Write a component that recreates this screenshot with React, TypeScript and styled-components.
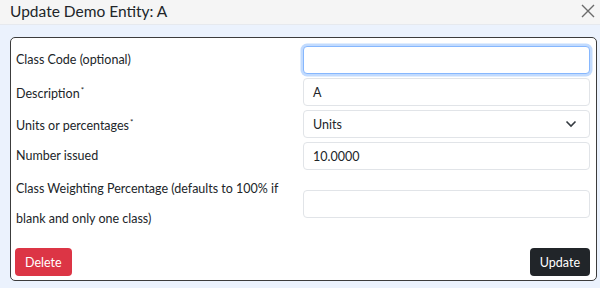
import React from 'react';
import styled, { createGlobalStyle } from 'styled-components';

const GlobalStyle = createGlobalStyle`
  html, body {
    margin: 0;
    padding: 0;
    width: 600px;
    height: 288px;
    overflow: hidden;
    background: #ebf2fd;
    font-family: Lato, "Noto Sans", sans-serif;
    color: #212529;
  }
  * { box-sizing: border-box; }
`;

const fields = [
  { label: 'Class Code (optional)', value: '', focused: true },
  { label: 'Description', required: true, value: 'A' },
  { label: 'Units or percentages', required: true, value: 'Units', select: true },
  { label: 'Number issued', value: '10.0000' },
];

export default function App() {
  return (
    <>
      <GlobalStyle />
      <Header>
        <Title>Update Demo Entity: A</Title>
        <CloseButton aria-label="Close">
          <svg width="14" height="14" viewBox="0 0 14 14">
            <path d="M1 1L13 13M13 1L1 13" stroke="#6b6b6b" strokeWidth="1.4" />
          </svg>
        </CloseButton>
      </Header>
      <Body>
        <Card>
          <Form>
            {fields.map((f) => (
              <Row key={f.label}>
                <Label>
                  {f.label}
                  {f.required && <Star>*</Star>}
                </Label>
                {f.select ? (
                  <SelectBox>
                    <span>{f.value}</span>
                    <svg width="12" height="8" viewBox="0 0 12 8">
                      <path d="M1.5 1.5L6 6L10.5 1.5" stroke="#343a40" strokeWidth="1.6" fill="none" />
                    </svg>
                  </SelectBox>
                ) : (
                  <Input focused={f.focused}>{f.value}</Input>
                )}
              </Row>
            ))}
            <Row>
              <Label tall>
                Class Weighting Percentage (defaults to 100% if blank and only one class)
              </Label>
              <Input />
            </Row>
          </Form>
          <Actions>
            <Button variant="danger">Delete</Button>
            <Button variant="dark">Update</Button>
          </Actions>
        </Card>
      </Body>
    </>
  );
}

const Header = styled.div`
  display: flex;
  align-items: center;
  justify-content: space-between;
  height: 25px;
  padding: 0 3px 2px 10px;
  background: #f5f5f5;
  border-bottom: 1px solid #e6e9ee;
`;

const Title = styled.div`
  font-size: 15.5px;
  color: #212529;
`;

const CloseButton = styled.div`
  display: flex;
  align-items: center;
  width: 16px;
  height: 16px;
`;

const Body = styled.div`
  padding: 12px 3px 6px 10px;
`;

const Card = styled.div`
  background: #fff;
  border: 1.5px solid #3c3c3c;
  border-radius: 5px;
  padding: 8px 6px 4px 4px;
`;

const Form = styled.div`
  display: flex;
  flex-direction: column;
  gap: 4px;
`;

const Row = styled.div`
  display: grid;
  grid-template-columns: 288px 1fr;
  align-items: center;
`;

const Label = styled.div<{ tall?: boolean }>`
  font-size: 12.5px;
  line-height: ${({ tall }) => (tall ? '30px' : '16px')};
  padding: 0 0 0 1px;
  padding-right: ${({ tall }) => (tall ? '12px' : '0')};
  color: #212529;
`;

const Star = styled.sup`
  font-size: 8px;
  margin-left: 1px;
`;

const Input = styled.div<{ focused?: boolean }>`
  height: 28px;
  display: flex;
  align-items: center;
  padding: 0 9px;
  font-size: 12.5px;
  color: #212529;
  background: #fff;
  border: 1px solid ${({ focused }) => (focused ? '#86b7fe' : '#e1e4e8')};
  border-radius: 4px;
  box-shadow: ${({ focused }) => (focused ? '0 0 0 2.5px rgba(13,110,253,0.25)' : 'none')};
`;

const SelectBox = styled(Input)`
  justify-content: space-between;
  padding-right: 12px;
`;

const Actions = styled.div`
  display: flex;
  justify-content: space-between;
  margin-top: 14px;
`;

const Button = styled.div<{ variant: 'danger' | 'dark' }>`
  height: 28px;
  padding: 0 10px;
  display: flex;
  align-items: center;
  border-radius: 4px;
  font-size: 12.5px;
  color: #fff;
  background: ${({ variant }) => (variant === 'danger' ? '#dc3545' : '#212529')};
`;
